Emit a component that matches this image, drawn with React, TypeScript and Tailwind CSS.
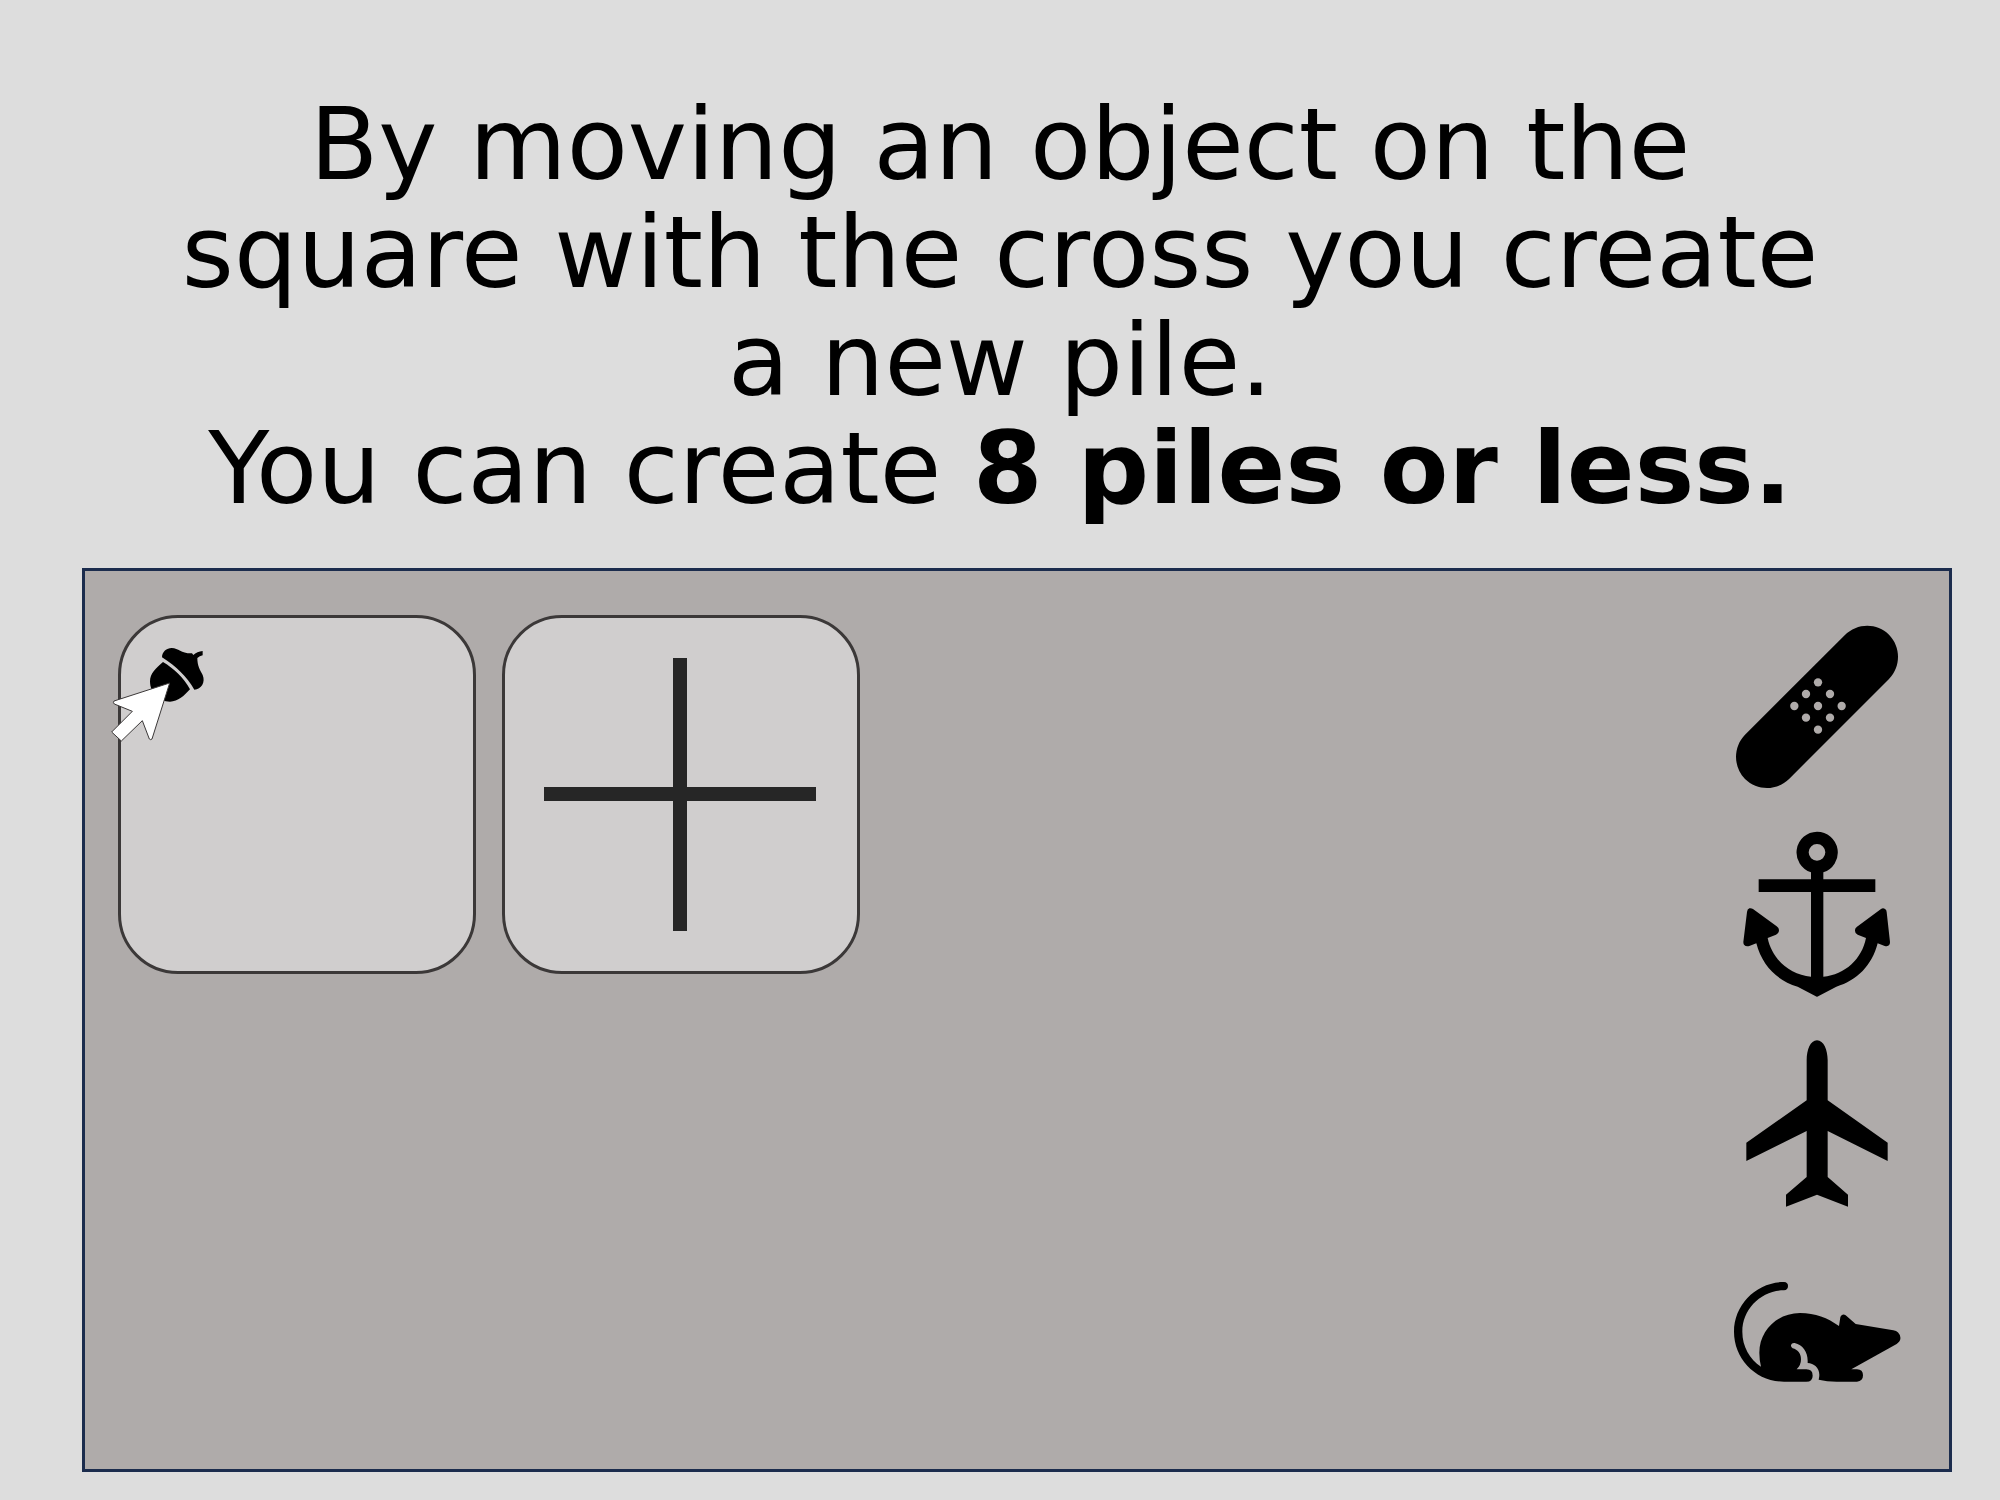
import type { ReactNode } from "react";

function ObjectButton({ label, viewBox, children }: { label: string; viewBox: string; children: ReactNode }) {
  return (
    <button type="button" aria-label={label} className="block cursor-grab">
      <svg viewBox={viewBox} className="h-[190px] w-[200px] fill-black" aria-hidden="true">
        {children}
      </svg>
    </button>
  );
}

const bandageHoles = [
  [294, 217],
  [258, 252],
  [330, 252],
  [223, 288],
  [294, 288],
  [365, 288],
  [258, 323],
  [330, 323],
  [294, 359],
];

function Bandage() {
  return (
    <ObjectButton label="Bandage" viewBox="0 0 600 570">
      <path d="M374 76C411 38 471 38 507 74C543 111 543 170 507 207L208 506C171 543 112 543 75 507C39 470 39 411 75 374Z" />
      {bandageHoles.map(([x, y]) => (
        <circle key={`${x}-${y}`} cx={x} cy={y} r="12.5" className="fill-[#afabaa]" />
      ))}
    </ObjectButton>
  );
}

function Anchor() {
  return (
    <ObjectButton label="Anchor" viewBox="0 0 600 570">
      <path
        fillRule="evenodd"
        d="M291 35A62.500 62.500 0 0 1 310 157V178H466V216H310V470C375 464 426 417 438 354L413 344Q404 340 405 330Q405 324 411 320L482 268Q488 263 494 266Q500 269 500 276L510 366Q510 377 500 379Q497 379 494 378L473 370C456 436 411 482 349 500L296 528Q291 532 286 528L233 500C171 482 126 436 109 370L88 378Q78 381 72 374Q70 371 70 366L81 276Q82 267 88 265Q94 264 99 267L170 319Q177 324 177 330Q177 340 168 344L143 354C156 417 208 464 273 470V216H116V178H273V157A62.500 62.500 0 0 1 291 35ZM291 72A25 25 0 1 0 291 122A25 25 0 1 0 291 72Z"
      />
    </ObjectButton>
  );
}

function Airplane() {
  return (
    <ObjectButton label="Airplane" viewBox="0 0 600 570">
      <path d="M291 31C311 31 323 60 323 90V211L503 338V393L323 303V441L384 494V530L291 494L198 530V494L260 441V303L79 393V338L260 211V90C260 60 271 31 291 31Z" />
    </ObjectButton>
  );
}

function Mouse() {
  return (
    <ObjectButton label="Mouse" viewBox="0 -90 600 570">
      <path d="M192 36C110 36 42 103 42 185C42 268 109 335 192 335H259Q278 335 278 317Q278 298 259 298H230Q243 286 243 268C243 250 233 239 218 235Q212 231 213 225Q215 218 224 219C248 224 263 246 263 272V279C281 279 298 294 298 314Q298 322 296 329Q320 335 350 335H411Q429 334 429 316Q429 298 411 298H394L530 222Q543 213 541 202Q538 184 520 181L407 162L377 136Q371 132 366 135Q362 137 361 142L357 168C323 144 286 129 240 129C172 129 118 182 118 248Q118 269 123 290C89 268 67 229 67 185C67 117 124 61 192 61Q204 60 204 48Q204 37 192 36Z" />
    </ObjectButton>
  );
}

/* The acorn being dragged, with the pointer that holds it. */
function DraggedAcorn() {
  return (
    <svg
      viewBox="120 249 300 300"
      className="absolute -left-[11px] top-[25px] size-[100px]"
      role="img"
      aria-label="Acorn held by the pointer"
    >
      <path d="M276 292C276 275 290 264 305 264C327 265 333 281 366 280L370 285C377 279 387 274 398 273V286Q389 288 382 294C382 318 390 329 398 345C407 367 394 388 373 389C350 350 319 319 276 292Z" />
      <path d="M279 306C312 326 341 353 360 388C343 407 324 425 300 425C266 425 240 398 240 364C240 340 258 325 279 306Z" />
      <path
        d="M299 369L246 537Q242 541 238 537L217 482L154 543L125 516L187 454L133 432Q128 428 132 423Z"
        className="fill-white stroke-[#3b3838]"
        strokeWidth="3"
        strokeLinejoin="round"
      />
    </svg>
  );
}

export default function App() {
  return (
    <main className="min-h-screen bg-[#dddddd] pt-[91px] pr-12 pb-7 pl-[82px] font-['DejaVu_Sans',sans-serif] text-black">
      <h1 className="-ml-[34px] text-center text-[100px] leading-[108px] font-normal">
        By moving an object on the
        <br />
        square with the cross you create
        <br />
        a new pile.
        <br />
        You can create <strong className="font-bold">8 piles or less.</strong>
      </h1>

      <section
        aria-label="Sorting area"
        className="mt-[45px] flex justify-between border-3 border-[#1b2c4d] bg-[#afabaa] pr-[29px] pl-[33px]"
      >
        <div className="flex items-start gap-[26px] pt-11">
          <div className="relative h-[359px] w-[358px] rounded-[60px] border-3 border-[#3b3838] bg-[#d0cece]">
            <DraggedAcorn />
          </div>
          <button
            type="button"
            aria-label="Create a new pile"
            className="flex h-[359px] w-[358px] items-center justify-center rounded-[60px] border-3 border-[#3b3838] bg-[#d0cece]"
          >
            <svg viewBox="0 0 274 273" className="h-[273px] w-[274px] fill-[#262626]" aria-hidden="true">
              <path d="M129 0H143V129H272V143H143V273H129V143H0V129H129Z" />
            </svg>
          </button>
        </div>

        <div className="flex flex-col gap-5 py-[39px]">
          <Bandage />
          <Anchor />
          <Airplane />
          <Mouse />
        </div>
      </section>
    </main>
  );
}
